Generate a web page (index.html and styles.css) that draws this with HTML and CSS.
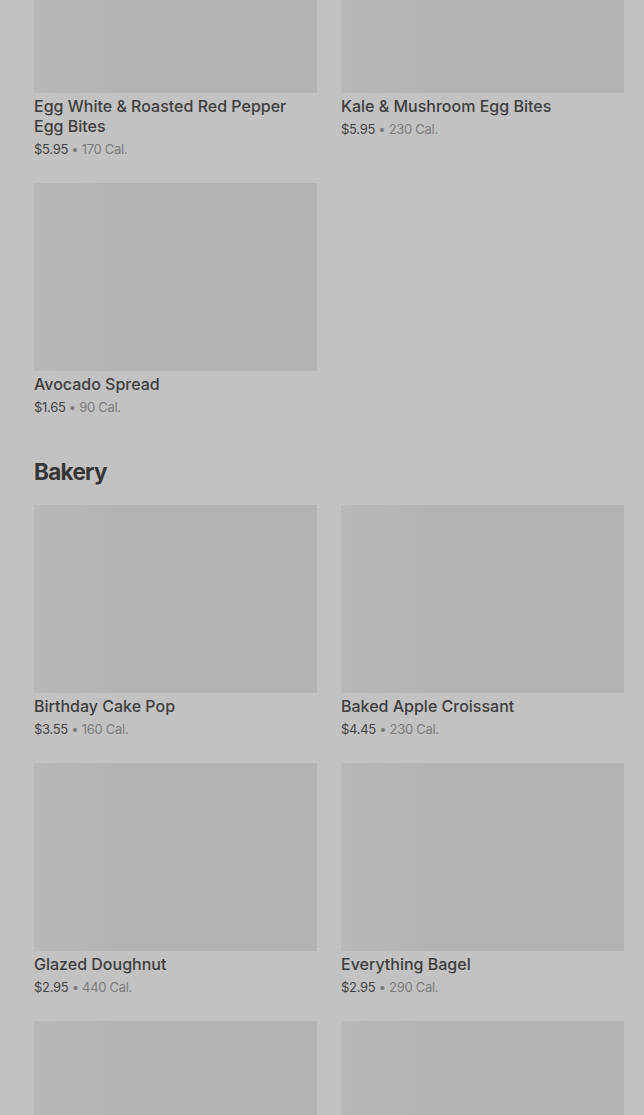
FILE: index.html
```html
<!DOCTYPE html>
<html lang="en">
<head>
    <meta charset="UTF-8">
    <meta name="viewport" content="width=device-width, initial-scale=1.0">
    <title>Menu</title>
    <link rel="stylesheet" href="styles.css">
</head>
<body>
    <main class="menu">
        <section class="category category-scrolled">
            <div class="grid">
                <div class="card">
                    <div class="thumb"></div>
                    <h3 class="name">Egg White &amp; Roasted Red Pepper Egg Bites</h3>
                    <p class="meta"><span class="price">$5.95</span> • 170 Cal.</p>
                </div>
                <div class="card">
                    <div class="thumb"></div>
                    <h3 class="name">Kale &amp; Mushroom Egg Bites</h3>
                    <p class="meta"><span class="price">$5.95</span> • 230 Cal.</p>
                </div>
                <div class="card">
                    <div class="thumb"></div>
                    <h3 class="name">Avocado Spread</h3>
                    <p class="meta"><span class="price">$1.65</span> • 90 Cal.</p>
                </div>
            </div>
        </section>

        <section class="category">
            <h2>Bakery</h2>
            <div class="grid">
                <div class="card">
                    <div class="thumb"></div>
                    <h3 class="name">Birthday Cake Pop</h3>
                    <p class="meta"><span class="price">$3.55</span> • 160 Cal.</p>
                </div>
                <div class="card">
                    <div class="thumb"></div>
                    <h3 class="name">Baked Apple Croissant</h3>
                    <p class="meta"><span class="price">$4.45</span> • 230 Cal.</p>
                </div>
                <div class="card">
                    <div class="thumb"></div>
                    <h3 class="name">Glazed Doughnut</h3>
                    <p class="meta"><span class="price">$2.95</span> • 440 Cal.</p>
                </div>
                <div class="card">
                    <div class="thumb"></div>
                    <h3 class="name">Everything Bagel</h3>
                    <p class="meta"><span class="price">$2.95</span> • 290 Cal.</p>
                </div>
                <div class="card">
                    <div class="thumb"></div>
                </div>
                <div class="card">
                    <div class="thumb"></div>
                </div>
            </div>
        </section>
    </main>
</body>
</html>
```

FILE: styles.css
```css
html, body {
    height: 100%;
}
body {
    font-family: Inter, "Noto Sans", Arial, sans-serif;
    background-color: #c2c2c2;
    margin: 0;
    padding: 0;
    overflow: hidden;
}
.menu {
    padding: 0 20px 0 34px;
}
/* page is scrolled, first row starts above the viewport */
.category-scrolled {
    margin-top: -95px;
}
.category h2 {
    margin: 42px 0 19px;
    font-size: 22.5px;
    line-height: 28px;
    font-weight: 700;
    letter-spacing: -0.7px;
    color: #363636;
}
.grid {
    display: grid;
    grid-template-columns: 1fr 1fr;
    column-gap: 24px;
    row-gap: 25px;
}
.card {
    min-width: 0;
}
.thumb {
    height: 188px;
    background: linear-gradient(to right, #b8b8b8, #b3b3b3 30%, #b3b3b3);
}
.name {
    margin: 3px 0 0;
    padding-right: 12px;
    font-size: 16px;
    line-height: 20px;
    font-weight: 500;
    color: #3e3e3e;
}
.meta {
    margin: 4px 0 0;
    font-size: 13px;
    line-height: 18px;
    color: #7c7c7c;
    letter-spacing: -0.3px;
}
.price {
    color: #444;
}
```
